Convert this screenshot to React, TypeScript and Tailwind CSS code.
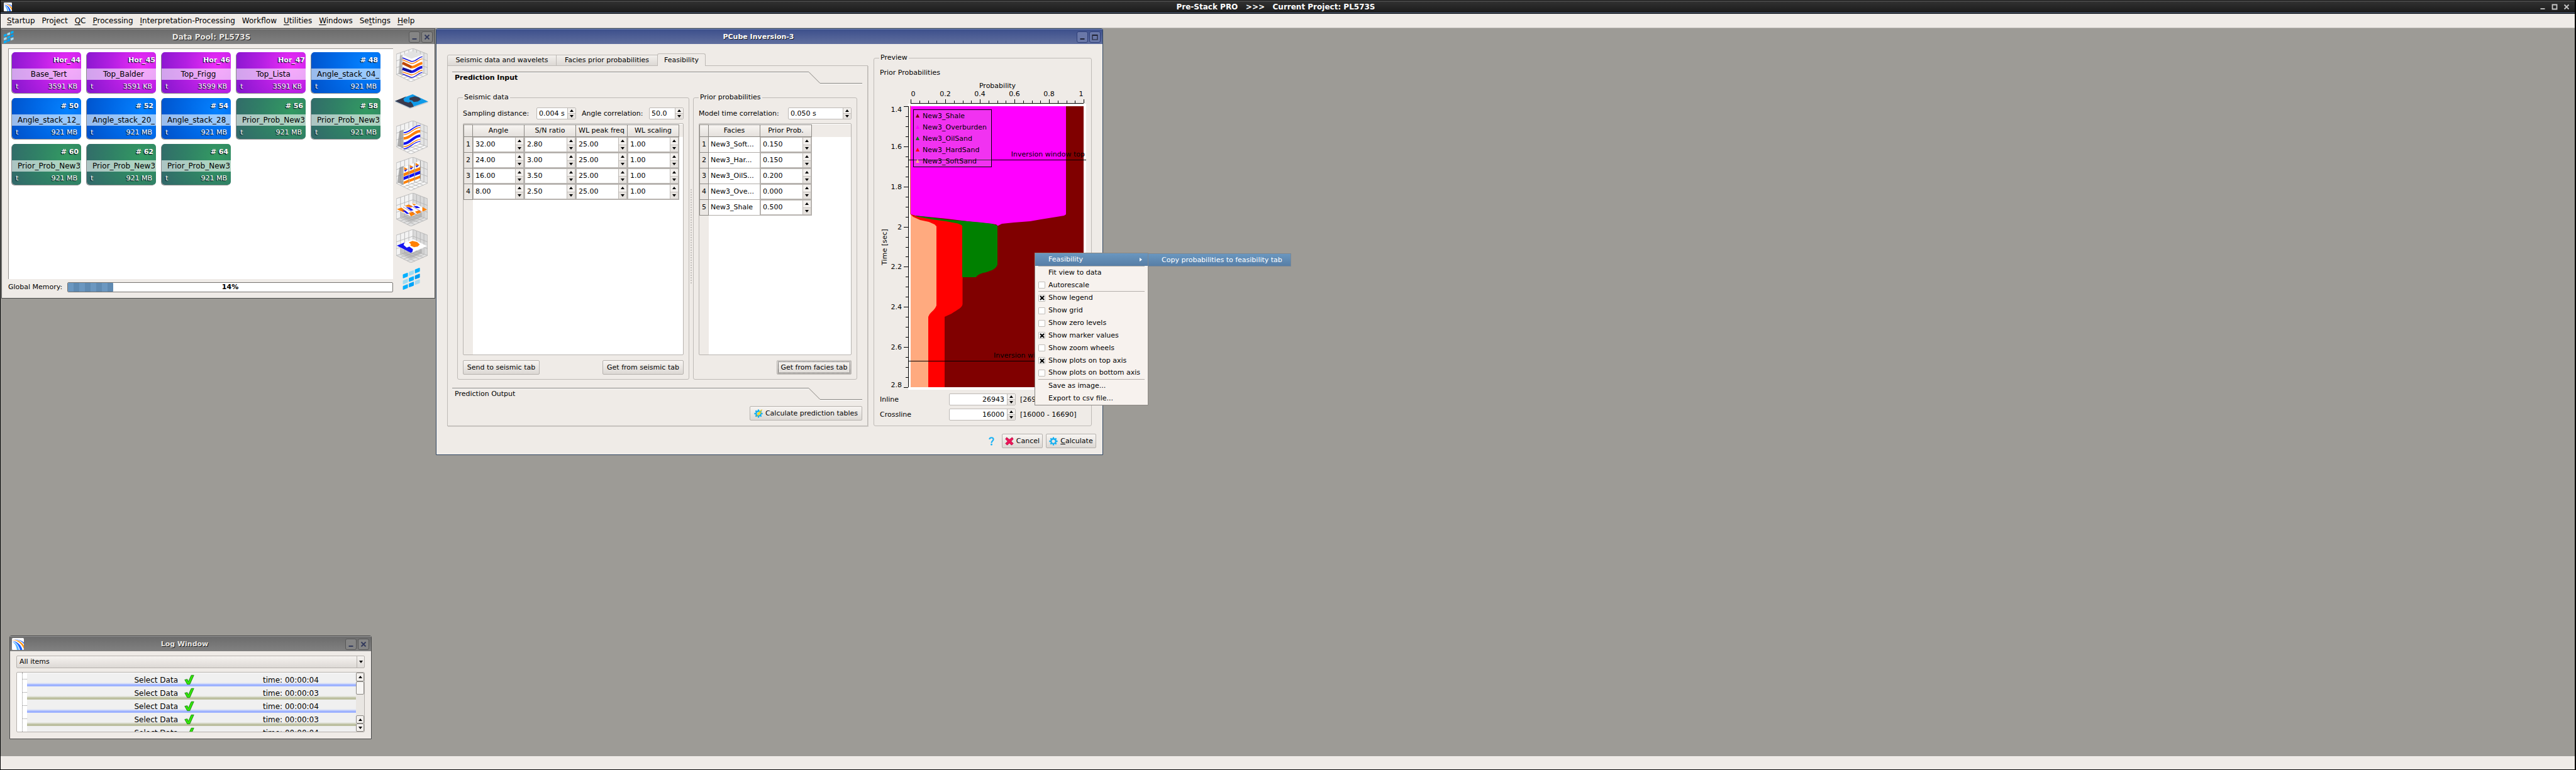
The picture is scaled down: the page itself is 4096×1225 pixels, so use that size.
import React from "react";

/* ---------- shared data ---------- */

const MENUS: [string, string, string][] = [
  ["", "S", "tartup"],
  ["Pro", "j", "ect"],
  ["", "Q", "C"],
  ["", "P", "rocessing"],
  ["", "I", "nterpretation-Processing"],
  ["Workflow", "", ""],
  ["", "U", "tilities"],
  ["", "W", "indows"],
  ["Se", "t", "tings"],
  ["", "H", "elp"],
];

type Kind = "horizon" | "stack" | "prior";
const TILES: { id: string; name: string; size: string; kind: Kind }[] = [
  { id: "Hor_44", name: "Base_Tert", size: "3591 KB", kind: "horizon" },
  { id: "Hor_45", name: "Top_Balder", size: "3591 KB", kind: "horizon" },
  { id: "Hor_46", name: "Top_Frigg", size: "3599 KB", kind: "horizon" },
  { id: "Hor_47", name: "Top_Lista", size: "3591 KB", kind: "horizon" },
  { id: "# 48", name: "Angle_stack_04_1", size: "921 MB", kind: "stack" },
  { id: "# 50", name: "Angle_stack_12_2", size: "921 MB", kind: "stack" },
  { id: "# 52", name: "Angle_stack_20_2", size: "921 MB", kind: "stack" },
  { id: "# 54", name: "Angle_stack_28_3", size: "921 MB", kind: "stack" },
  { id: "# 56", name: "Prior_Prob_New3_", size: "921 MB", kind: "prior" },
  { id: "# 58", name: "Prior_Prob_New3_", size: "921 MB", kind: "prior" },
  { id: "# 60", name: "Prior_Prob_New3_", size: "921 MB", kind: "prior" },
  { id: "# 62", name: "Prior_Prob_New3_", size: "921 MB", kind: "prior" },
  { id: "# 64", name: "Prior_Prob_New3_", size: "921 MB", kind: "prior" },
];

const TILE_BG: Record<Kind, string> = {
  horizon: "bg-[radial-gradient(circle_at_80%_30%,#ee2df8_0%,#b31fe2_50%,#8316cc_100%)]",
  stack: "bg-[radial-gradient(circle_at_80%_30%,#0582ff_0%,#0068e6_50%,#0050c8_100%)]",
  prior: "bg-[radial-gradient(circle_at_80%_30%,#339a62_0%,#308066_50%,#32686a_100%)]",
};

/* ---------- small drawings ---------- */

function AppLogo({ className }: { className: string }) {
  return (
    <svg viewBox="0 0 24 24" className={className} preserveAspectRatio="none" aria-hidden="true">
      <rect width="24" height="24" rx="2" fill="#fff" />
      <path d="M0 3C10 2 20 6 24 12V9C19 4 9 2 0 3Z" fill="#1a62ff" />
      <path d="M0 4C12 4 20 12 24 22V15C19 7 10 3 0 4Z" fill="#ff9416" />
      <path d="M0 6C8 7 14 15 16 24H21C19 14 10 6 0 6Z" fill="#1a62ff" />
      <path d="M0 8C5 9 9 16 10 24H14C13 15 7 8 0 8Z" fill="#59b4ff" />
    </svg>
  );
}

function PoolGlyph({ className }: { className: string }) {
  const cells: [number, number, string][] = [
    [0, 10, "#00b0ff"], [12, 5, "#9fdcf2"], [24, 0, "#00b0ff"],
    [0, 22, "#9fdcf2"], [12, 17, "#00b0ff"], [24, 12, "#009bf0"],
    [0, 33, "#00b0ff"], [12, 28, "#00a4fa"], [24, 23, "#a6d8ee"],
  ];
  return (
    <svg viewBox="0 0 35 44" className={className} aria-hidden="true">
      {cells.map(([x, y, c]) => (
        <path key={`${x}-${y}`} d={`M${x + 1} ${y + 3}l8-3q1 0 1 1v6l-1 1-8 3q-1 0-1-1v-6z`} fill={c} />
      ))}
    </svg>
  );
}

function Backdrop({ dark }: { dark?: boolean }) {
  return (
    <>
      <path d="M0 11L32 0V40L0 50Z" fill="#f3f3f3" />
      <path d="M32 0L60 11V50L32 40Z" fill={dark ? "#d9d9d9" : "#e4e4e4"} />
      <path d="M0 50L32 40L60 50L28 64Z" fill={dark ? "#e0e0e0" : "#f8f8f8"} />
      <path
        d="M0 11L32 0L60 11V50L28 64L0 50ZM32 0V40M0 24L32 13L60 24M0 37L32 27L60 37M0 50L32 40L60 50M8 8V48M16 6V45M24 3V43M39 3V43M46 6V45M53 8V48M7 54L39 43M14 57L46 45M21 60L53 48M8 48L36 61M16 45L44 57M24 43L52 54"
        fill="none"
        stroke="#b2b2b2"
        strokeWidth="1"
      />
    </>
  );
}

function CubeIcon() {
  return (
    <svg viewBox="0 0 60 64" className="h-[53px] w-[50px]" aria-hidden="true">
      <Backdrop />
      <path d="M7 14L12 12V52L4 49Z" fill="#999" opacity="0.6" />
      <path d="M12 12L30 5L50 12L29 20Z" fill="#e2e2e2" />
      <path d="M12 12L29 20V57L12 49Z" fill="#fafafa" />
      <path d="M29 20L50 12V47C44 48 38 56 29 57Z" fill="#fff" />
      <g fill="none">
        <path d="M12 18L29 25C37 26 42 17 50 16" stroke="#1b17d8" strokeWidth="2" />
        <path d="M12 22L29 29C37 30 42 21 50 20" stroke="#ff7d0a" strokeWidth="1.6" />
        <path d="M12 28L29 36C37 37 42 29 50 28" stroke="#ff7d0a" strokeWidth="5" />
        <path d="M12 28L29 36" stroke="#c04808" strokeWidth="5" />
        <path d="M12 39L29 45C37 45 42 36 50 36" stroke="#1b17d8" strokeWidth="5" />
        <path d="M12 39L29 45" stroke="#10109c" strokeWidth="5" />
        <path d="M12 45L29 51C37 51 42 43 50 42" stroke="#ff7d0a" strokeWidth="1.6" />
        <path d="M12 49L29 56C37 56 42 47 50 46" stroke="#1b17d8" strokeWidth="1.6" />
      </g>
    </svg>
  );
}

function MapIcon() {
  return (
    <svg viewBox="0 0 64 28" className="h-[23px] w-[53px]" aria-hidden="true">
      <path d="M0 13L29 25L64 14V16L29 28L0 15Z" fill="#c9cbd0" />
      <path d="M0 13L34 0L64 14L29 26Z" fill="#0f9ae8" />
      <path d="M0 13L22 4L16 9L18 14L26 16L30 14L34 19L36 24L29 26Z" fill="#3a3a4c" />
      <path d="M28 7L38 4L46 6L50 10L44 14L36 15L33 12L28 11Z" fill="#3a3a4c" />
    </svg>
  );
}

function SectionIcon() {
  return (
    <svg viewBox="0 0 60 64" className="h-[53px] w-[50px]" aria-hidden="true">
      <Backdrop />
      <path d="M6 20L14 17V54L2 48Z" fill="#8d8d8d" opacity="0.7" />
      <path d="M14 19L46 7V43L14 55Z" fill="#fff" />
      <g fill="none">
        <path d="M14 23C26 24 33 9 46 9" stroke="#1414f0" strokeWidth="2" />
        <path d="M14 27C26 28 33 13 46 13" stroke="#ff8000" strokeWidth="1.6" />
        <path d="M14 34C26 35 33 20 46 20" stroke="#ff8000" strokeWidth="5" />
        <path d="M14 44C26 45 33 29 46 29" stroke="#1414f0" strokeWidth="5" />
        <path d="M14 50C26 51 33 36 46 36" stroke="#ff8000" strokeWidth="1.6" />
        <path d="M14 54C26 54 33 40 46 40" stroke="#1414f0" strokeWidth="1.8" />
      </g>
    </svg>
  );
}

function GatherIcon() {
  return (
    <svg viewBox="0 0 60 64" className="h-[53px] w-[50px]" aria-hidden="true">
      <Backdrop />
      <path d="M6 20L14 17V54L2 48Z" fill="#8d8d8d" opacity="0.7" />
      {[14, 25, 36].map((x, i) => (
        <g key={x} transform={`translate(${x} ${19 - i * 4})`}>
          <path d="M0 0L10 -4V32L0 36Z" fill="#fff" />
          <path d="M1 0L8 4L1 6Z" fill="#ff8000" />
          <path d="M1 6L8 4L3 9Z" fill="#1414f0" />
          <path d="M0 12L10 8V14L0 18Z" fill="#ff8000" />
          <path d="M0 19L10 15V21L0 25Z" fill="#1414f0" />
          <path d="M0 28L10 24V29L0 33Z" fill="#ff8000" />
          <path d="M10 -4V32" stroke="#777" strokeWidth="1" />
        </g>
      ))}
    </svg>
  );
}

function SliceIcon() {
  return (
    <svg viewBox="0 0 60 64" className="h-[53px] w-[50px]" aria-hidden="true">
      <Backdrop dark />
      <path d="M8 36L30 45L50 37L50 46L28 56L8 46Z" fill="#a5a5a5" opacity="0.6" />
      <path d="M1 31L33 19L59 32L28 45Z" fill="#fff" />
      <path d="M1 31L10 28L18 34L14 37ZM16 25L24 22L32 26L28 28ZM30 20L38 22L34 24ZM50 27L59 32L50 36ZM36 36L44 33L48 37L40 40ZM24 38L32 36L36 41L28 45Z" fill="#ff8000" />
      <path d="M11 33L18 34L25 40L20 40ZM18 27L26 28L33 33L28 34ZM33 25L40 25L46 29L38 29Z" fill="#1414f0" />
      <path d="M13 27L38 41M25 23L49 36" stroke="#9a6f9a" strokeWidth="1" />
    </svg>
  );
}

function HorizonIcon() {
  return (
    <svg viewBox="0 0 60 64" className="h-[53px] w-[50px]" aria-hidden="true">
      <Backdrop dark />
      <path d="M8 36L30 45L50 37L50 46L28 56L8 46Z" fill="#a5a5a5" opacity="0.6" />
      <path d="M1 31L33 19L59 32L28 45Z" fill="#fff" />
      <path d="M1 31L16 25L14 30L20 35L25 33L32 38L31 43L28 45Z" fill="#1414f0" />
      <path d="M24 25L31 22L40 24L45 29L41 33L34 34L27 31L28 28Z" fill="#ff8000" />
    </svg>
  );
}

function Gear({ bolt }: { bolt?: boolean }) {
  return (
    <svg viewBox="0 0 16 16" className="size-[14px] shrink-0" aria-hidden="true">
      <g fill="none" stroke="#12aef0">
        <circle cx="8" cy="8" r="4.3" strokeWidth="2.6" />
        <path d="M8 0.5V3M8 13V15.5M0.5 8H3M13 8H15.5M2.7 2.7L4.5 4.5M11.5 11.5L13.3 13.3M13.3 2.7L11.5 4.5M4.5 11.5L2.7 13.3" strokeWidth="2.6" />
      </g>
      {bolt && <path d="M13 1L5 9L8 9L4 14L14 6L10 6L15 1Z" fill="#ffe21a" stroke="#c9a800" strokeWidth="0.4" />}
    </svg>
  );
}

function CrossGlyph() {
  return (
    <svg viewBox="0 0 16 16" className="size-[14px] shrink-0" aria-hidden="true">
      <path d="M3 1L8 5L13 1L15 4L11 8L15 12L12 15L8 11L4 15L1 12L5 8L1 4Z" fill="#f0145a" stroke="#b00a3c" strokeWidth="1" />
    </svg>
  );
}

function HelpGlyph() {
  return (
    <svg viewBox="0 0 10 16" className="h-[14px] w-[9px]" aria-hidden="true">
      <path d="M1.5 4.5C1.5 0.5 8.5 0.5 8.5 4.5C8.5 7.5 5 7.5 5 11" fill="none" stroke="#1ab2f5" strokeWidth="2.4" />
      <circle cx="5" cy="14" r="1.6" fill="#1ab2f5" />
    </svg>
  );
}

function Tick() {
  return (
    <svg viewBox="0 0 20 20" className="h-[17px] w-[16px]" aria-hidden="true">
      <path d="M1 10L6 9L8 14L14 1L19 1L11 19L6 19Z" fill="#33e60a" stroke="#1c8c10" strokeWidth="1.2" />
    </svg>
  );
}

function Tri({ down }: { down?: boolean }) {
  return (
    <svg viewBox="0 0 6 4" className="h-[4px] w-[6px]" aria-hidden="true">
      <path d={down ? "M0 0H6L3 4Z" : "M0 4H6L3 0Z"} fill="#000" />
    </svg>
  );
}

/* ---------- controls ---------- */

function WinButton({ kind, active }: { kind: "min" | "max" | "close"; active?: boolean }) {
  return (
    <button
      type="button"
      aria-label={kind}
      className={`flex size-[18px] items-center justify-center rounded-[3px] border ${
        active ? "border-[#2f3f78] bg-[#6a78a8]" : "border-[#575757] bg-[#858585]"
      }`}
    >
      <svg viewBox="0 0 10 10" className="size-[10px]" fill="none" stroke={active ? "#1f2233" : "#333a5c"} aria-hidden="true">
        {kind === "min" && <path d="M1.5 8H8.5" strokeWidth="2" />}
        {kind === "max" && <path d="M1 1.5H9V9H1ZM1 2.5H9" strokeWidth="1.2" />}
        {kind === "close" && <path d="M1.5 1.5L8.5 8.5M8.5 1.5L1.5 8.5" strokeWidth="1.8" />}
      </svg>
    </button>
  );
}

function TitleBar({
  title,
  active,
  icon,
  last,
}: {
  title: string;
  active?: boolean;
  icon?: React.ReactNode;
  last: "max" | "close";
}) {
  return (
    <header
      className={`flex h-[24px] shrink-0 items-center gap-[2px] border-t pr-[3px] ${icon ? "pl-[3px]" : "pl-[8px]"} ${
        active
          ? "border-[#7383b8] bg-linear-to-b from-[#3d508c] to-[#606e9e]"
          : "border-[#979797] bg-linear-to-b from-[#6c6c6c] to-[#818181]"
      }`}
    >
      {icon}
      <h2 className={`flex-1 text-center font-bold [text-shadow:1px_1px_0_#1c1c1c] ${active ? "text-white" : "text-[#e8e6e2]"}`}>
        {title}
      </h2>
      <WinButton kind="min" active={active} />
      <WinButton kind={last} active={active} />
    </header>
  );
}

function Spin({ value, label, className, right, flat }: { value: string; label: string; className: string; right?: boolean; flat?: boolean }) {
  return (
    <span className={`flex overflow-hidden border border-[#bdb9b5] bg-white ${flat ? "" : "rounded-[2px]"} ${className}`}>
      <input
        aria-label={label}
        defaultValue={value}
        className={`min-w-0 flex-1 bg-transparent outline-none ${right ? "pr-[4px] text-right" : "pl-[3px]"}`}
      />
      <span className="flex w-[13px] shrink-0 flex-col border-l border-[#bdb9b5]">
        <button type="button" aria-label={`${label} up`} className="flex flex-1 items-center justify-center border-b border-[#c8c4c0] bg-[#f3f0ed]">
          <Tri />
        </button>
        <button type="button" aria-label={`${label} down`} className="flex flex-1 items-center justify-center bg-[#e6e2de]">
          <Tri down />
        </button>
      </span>
    </span>
  );
}

function Push({ children, className = "", focus }: { children: React.ReactNode; className?: string; focus?: boolean }) {
  return (
    <button
      type="button"
      className={`flex h-[23px] items-center justify-center rounded-[2px] border border-[#b5b1ad] bg-linear-to-b from-[#f8f5f2] to-[#dcd8d4] p-px whitespace-nowrap ${className}`}
    >
      <span className={`flex h-full items-center justify-center gap-[4px] ${focus ? "w-full border border-dotted border-black" : ""}`}>{children}</span>
    </button>
  );
}

function Group({ title, className, children }: { title: string; className: string; children: React.ReactNode }) {
  return (
    <fieldset className={`min-w-0 rounded-[3px] border border-[#bebab6] px-[8px] ${className}`}>
      <legend className="px-[2px] leading-[14px]">{title}</legend>
      {children}
    </fieldset>
  );
}

function SectionHead({ title, bold }: { title: string; bold?: boolean }) {
  return (
    <div className="flex h-[19px] items-stretch">
      <h3 className={`flex flex-1 items-center border-t border-[#85827e] pl-[4px] shadow-[inset_0_1px_0_#fff] ${bold ? "font-bold" : ""}`}>{title}</h3>
      <svg viewBox="0 0 18 19" className="w-[18px]" aria-hidden="true">
        <path d="M0 0.5L18 18.5" stroke="#85827e" />
      </svg>
      <div className="w-[67px] border-b border-[#85827e] shadow-[0_1px_0_#fff]" />
    </div>
  );
}

const TH = "h-[20px] border-t border-r border-b border-[#8c8984] bg-linear-to-b from-[#f8f5f2] to-[#e4e0dc] p-0 text-center font-normal whitespace-nowrap overflow-hidden";
const RH = "h-[25px] border-r border-b border-[#8c8984] bg-[#ebe7e3] p-0 text-center font-normal";
const TD = "h-[25px] border-r border-b border-[#b0aca8] bg-white p-0";

function DataTable({ heads, rows, textFirst, name }: { heads: string[]; rows: string[][]; textFirst?: boolean; name: string }) {
  return (
    <div className="flex-1 rounded-[2px] border border-[#b8b4b0] bg-[linear-gradient(to_right,#efebe7_15px,#fff_15px)] pt-px">
      <table aria-label={name} className="w-full table-fixed border-separate border-spacing-0">
        <colgroup>
          <col className="w-[15px]" />
          {heads.map((h) => (
            <col key={h} className="w-[82px]" />
          ))}
          <col />
        </colgroup>
        <thead>
          <tr>
            <th className={`${TH} border-l`} />
            {heads.map((h) => (
              <th key={h} scope="col" className={TH}>
                {h}
              </th>
            ))}
            <th className="bg-[#efebe7] p-0" />
          </tr>
        </thead>
        <tbody>
          {rows.map((r, i) => (
            <tr key={i}>
              <th scope="row" className={`${RH} border-l`}>
                {i + 1}
              </th>
              {r.map((v, j) => (
                <td key={j} className={TD}>
                  {textFirst && j === 0 ? <span className="block pl-[3px]">{v}</span> : <Spin flat className="h-[24px] w-full" value={v} label={`${heads[j]} ${i + 1}`} />}
                </td>
              ))}
              <td className="p-0" />
            </tr>
          ))}
        </tbody>
      </table>
    </div>
  );
}

/* ---------- windows ---------- */

function DataPool() {
  return (
    <section className="absolute top-0 left-px flex h-[430px] w-[690px] flex-col border border-[#4a4a4a] bg-[#efebe7] text-[12px]">
      <TitleBar title="Data Pool: PL573S" last="close" icon={<PoolGlyph className="h-[20px] w-[16px]" />} />
      <div className="flex flex-1 pt-[7px] pr-[8px] pl-[10px]">
        <div className="flex w-[612px] flex-col">
          <ul className="grid h-[367px] grid-cols-[repeat(5,110px)] content-start gap-x-[9px] gap-y-[8px] border-t border-l border-[#96938f] bg-white pt-[5px] pl-[5px]">
            {TILES.map((t) => (
              <li
                key={t.id}
                className={`flex h-[65px] flex-col overflow-hidden rounded-[5px] text-white shadow-[-1px_1px_0_#8a8a8a] ${TILE_BG[t.kind]}`}
              >
                <span className={`flex h-[26px] items-center justify-end text-[11px] font-bold [text-shadow:-1px_1px_1px_#000] ${t.kind === "horizon" ? "pr-[1px]" : "pr-[4px]"}`}>
                  {t.id}
                </span>
                <span className="flex h-[18px] items-center bg-white/60 pr-[2px] pl-[9px] text-black">
                  <span className={`w-full overflow-hidden whitespace-nowrap ${t.kind === "horizon" ? "text-center" : ""}`}>{t.name}</span>
                </span>
                <span className="flex flex-1 items-center justify-between px-[6px] text-[11px] [text-shadow:-1px_1px_1px_#000]">
                  <span>t</span>
                  <span>{t.size}</span>
                </span>
              </li>
            ))}
          </ul>
          <div className="mt-[5px] flex h-[16px] items-center text-[11px]">
            <span className="w-[94px] whitespace-nowrap">Global Memory:</span>
            <div role="progressbar" aria-valuenow={14} className="grid h-full flex-1 rounded-[2px] border border-[#76736f] bg-white">
              <div className="h-full w-[14%] rounded-[1px] bg-[repeating-linear-gradient(to_right,#6b97c0_0_9px,#5f8ab2_9px_18px)] [grid-area:1/1]" />
              <div className="text-center leading-[14px] font-bold [grid-area:1/1]">14%</div>
            </div>
          </div>
        </div>
        <div className="flex h-[387px] flex-1 flex-col items-center justify-between pl-[1px]">
          <CubeIcon />
          <span className="flex h-[53px] items-center">
            <MapIcon />
          </span>
          <SectionIcon />
          <GatherIcon />
          <SliceIcon />
          <HorizonIcon />
          <span className="flex h-[42px] items-center">
            <PoolGlyph className="h-[35px] w-[29px]" />
          </span>
        </div>
      </div>
    </section>
  );
}

function LogWindow() {
  const rows = ["04", "03", "04", "03", "04"];
  return (
    <section className="absolute top-[966px] left-[14px] flex w-[576px] flex-col rounded-t-[3px] border border-[#4a4a4a] bg-[#efebe7]">
      <TitleBar title="Log Window" last="close" icon={<AppLogo className="size-[19px]" />} />
      <div className="flex flex-col gap-[6px] px-[10px] pt-[7px] pb-[10px]">
        <label className="relative flex h-[20px]">
          <span className="sr-only">Item filter</span>
          <select className="h-full w-full appearance-none rounded-[2px] border border-[#b5b1ad] bg-linear-to-b from-[#f6f3f0] to-[#ddd9d5] pl-[4px] outline-none">
            <option>All items</option>
          </select>
          <span className="pointer-events-none absolute top-0 right-0 flex h-full w-[13px] items-center justify-center border-l border-[#b5b1ad]">
            <Tri down />
          </span>
        </label>
        <div className="flex h-[96px] overflow-hidden rounded-[2px] border border-[#b5b1ad] bg-white">
          <div className="flex w-[16px] justify-end">
            <div className="h-full w-[8px] border-l border-dotted border-[#8c8c8c]">
              {rows.map((_, i) => (
                <div key={i} className="h-[21px] pt-[10px]">
                  <div className="border-t border-dotted border-[#8c8c8c]" />
                </div>
              ))}
            </div>
          </div>
          <ul className="flex-1 pt-px">
            {rows.map((s, i) => (
              <li
                key={i}
                className={`grid h-[21px] grid-cols-[240px_26px_1fr] items-center ${
                  i % 2 === 0
                    ? "bg-[linear-gradient(to_bottom,#f0f0f0_70%,#ccd6fa_82%,#9db2ff_85%)]"
                    : "bg-[linear-gradient(to_bottom,#f0f0f0_70%,#d4d6c4_82%,#bcbf9f_85%)]"
                }`}
              >
                <span className="text-right text-[12px]">Select Data</span>
                <span className="flex justify-end">
                  <Tick />
                </span>
                <span className="pl-[109px] text-[12px]">time: 00:00:{s}</span>
              </li>
            ))}
          </ul>
          <div className="flex w-[13px] flex-col bg-[#e9e6e2]">
            <button type="button" aria-label="Scroll up" className="flex h-[14px] items-center justify-center rounded-[2px] border border-[#8c8984] bg-[#f3f0ed]">
              <Tri />
            </button>
            <div className="h-[21px] rounded-[2px] border border-[#8c8984] bg-[#f7f5f3]" />
            <div className="flex-1" />
            <button type="button" aria-label="Page up" className="flex h-[13px] items-center justify-center rounded-[2px] border border-[#8c8984] bg-[#f3f0ed]">
              <Tri />
            </button>
            <button type="button" aria-label="Scroll down" className="flex h-[13px] items-center justify-center rounded-[2px] border border-[#8c8984] bg-[#f3f0ed]">
              <Tri down />
            </button>
          </div>
        </div>
      </div>
    </section>
  );
}

const LEGEND: [string, string][] = [
  ["New3_Shale", "#800000"],
  ["New3_Overburden", "#ff00ff"],
  ["New3_OilSand", "#008000"],
  ["New3_HardSand", "#ff0000"],
  ["New3_SoftSand", "#ffaa7f"],
];

/* The plot spans probability 0..1 over x 52..327 and time 1.4..2.8 s over y 41..488. */
function ProbabilityPlot() {
  const px = (p: number) => 52 + 275 * p;
  const ty = (t: number) => 41 + (447 * (t - 1.4)) / 1.4;
  const xs = Array.from({ length: 21 }, (_, i) => i);
  const ys = Array.from({ length: 29 }, (_, i) => i);
  return (
    <svg viewBox="0 0 333 493" className="h-[493px] w-full" role="img" aria-label="Prior probabilities against time" fontSize="11">
      <rect x="48" y="37" width="283" height="455" fill="#fff" />
      <rect x="52" y="41" width="275" height="447" fill="#800000" />
      <path d="M52 41H299V213L296 215L284 217L259 221L242 224L216 226L197 228L191 231H190L188 229L180 228L150 225L110 220L80 217L59 215L52 213Z" fill="#f0f" />
      <path d="M52 213L59 215L84 218L106 221L160 225.5L182 228L190 231V293C188 300 178 304 168 306C160 308 157 311 156 313H100L120 250Z" fill="#008000" />
      <path d="M52 213L64 217L86 221L108 224L127 227.5L133 230L134.5 233V356C134 362 124 366 117 371L106 376V488H60Z" fill="#f00" />
      <path d="M134 233V313H156L170 250Z" fill="#008000" />
      <path d="M52 213L56 217L67 222L81 225L90 229L93 232V358C91 364 86 367 82 372L80 376V488H52Z" fill="#ffaa7f" />
      <path d="M51.5 40V213" stroke="#e08040" />
      <g stroke="#000" shapeRendering="crispEdges">
        <path d="M52 36.5H327M48.5 41V488" fill="none" />
        {xs.map((i) => (
          <path key={i} d={`M${Math.round(px(i / 20))}.5 36V${i % 4 ? 32 : 30}`} />
        ))}
        {ys.map((i) => (
          <path key={i} d={`M48 ${Math.round(ty(1.4 + i * 0.05))}.5H${i % 4 ? 44 : 41}`} />
        ))}
      </g>
      <text x="190" y="12" textAnchor="middle">Probability</text>
      {["0", "0.2", "0.4", "0.6", "0.8", "1"].map((t, i) => (
        <text key={t} x={i === 0 ? 56 : i === 5 ? 323 : px(i / 5)} y="25" textAnchor="middle">
          {t}
        </text>
      ))}
      {["1.4", "1.6", "1.8", "2", "2.2", "2.4", "2.6", "2.8"].map((t, i) => (
        <text key={t} x="38" y={ty(1.4 + i * 0.2) + (i === 0 ? 9 : i === 7 ? 0 : 4)} textAnchor="end">
          {t}
        </text>
      ))}
      <text transform="translate(14 265) rotate(-90)" textAnchor="middle">Time [sec]</text>
      <path d="M48 126.5H331M48 446.5H331" stroke="#000" />
      <rect x="56.5" y="46.5" width="124" height="91" fill="#c8c8c8" fillOpacity="0.25" stroke="#000" />
      {LEGEND.map(([n, c], i) => (
        <g key={n}>
          <path d={`M60 ${59 + i * 18}h6l-3 -6z`} fill={c} />
          <text x="71" y={60 + i * 18}>{n}</text>
        </g>
      ))}
      <text x="329" y="121" textAnchor="end">Inversion window top</text>
      <text x="184" y="441">Inversion window base</text>
    </svg>
  );
}

function PCube() {
  return (
    <section className="absolute top-0 left-[692px] flex w-[1061px] flex-col rounded-t-[3px] border border-[#2f4560] bg-[#efebe7]">
      <TitleBar title="PCube Inversion-3" active last="max" />
      <div className="flex flex-col pt-[15px] pr-[17px] pb-[10px] pl-[17px]">
        <div className="flex h-[593px] gap-[9px]">
          <div className="flex flex-1 flex-col">
            <div role="tablist" className="relative z-10 -mb-px flex h-[20px] items-end">
              <button role="tab" aria-selected="false" className="h-[18px] w-[174px] rounded-tl-[3px] border border-[#bebab6] bg-linear-to-b from-[#f3f0ed] to-[#dcd8d4] leading-[16px]">
                Seismic data and wavelets
              </button>
              <button role="tab" aria-selected="false" className="-ml-px h-[18px] w-[162px] border border-[#bebab6] bg-linear-to-b from-[#f3f0ed] to-[#dcd8d4] leading-[16px]">
                Facies prior probabilities
              </button>
              <button role="tab" aria-selected="true" className="-ml-px h-[20px] w-[77px] rounded-t-[3px] border border-b-0 border-[#bebab6] bg-[#efebe7]">
                Feasibility
              </button>
            </div>
            <div className="flex flex-1 flex-col border border-[#bebab6] pt-[9px] pr-[8px] pl-[7px] shadow-[1px_1px_0_#cfcbc7]">
              <SectionHead title="Prediction Input" bold />
              <div className="mt-[15px] flex h-[456px] px-[8px]">
                <Group title="Seismic data" className="flex-1">
                  <div className="flex h-full flex-col pt-[9px] pb-[7px]">
                    <div className="mb-[6px] flex h-[19px] items-center justify-between whitespace-nowrap">
                      <span className="w-[115px]">Sampling distance:</span>
                      <Spin className="h-full w-[63px]" value="0.004 s" label="Sampling distance" />
                      <span className="ml-[7px] w-[105px]">Angle correlation:</span>
                      <Spin className="h-full w-[55px]" value="50.0" label="Angle correlation" />
                    </div>
                    <DataTable
                      name="Seismic data"
                      heads={["Angle", "S/N ratio", "WL peak freq", "WL scaling"]}
                      rows={[
                        ["32.00", "2.80", "25.00", "1.00"],
                        ["24.00", "3.00", "25.00", "1.00"],
                        ["16.00", "3.50", "25.00", "1.00"],
                        ["8.00", "2.50", "25.00", "1.00"],
                      ]}
                    />
                    <div className="mt-[8px] flex justify-between">
                      <Push className="w-[122px]">Send to seismic tab</Push>
                      <Push className="w-[129px]">Get from seismic tab</Push>
                    </div>
                  </div>
                </Group>
                <div className="flex w-[6px] items-center justify-center">
                  <div className="h-[150px] border-l-2 border-dotted border-[#c4c0bc]" />
                </div>
                <Group title="Prior probabilities" className="w-[261px]">
                  <div className="flex h-full flex-col pt-[9px] pb-[7px]">
                    <div className="mb-[6px] flex h-[19px] items-center justify-between whitespace-nowrap">
                      <span>Model time correlation:</span>
                      <Spin className="h-full w-[101px]" value="0.050 s" label="Model time correlation" />
                    </div>
                    <DataTable
                      name="Prior probabilities"
                      textFirst
                      heads={["Facies", "Prior Prob."]}
                      rows={[
                        ["New3_Soft...", "0.150"],
                        ["New3_Har...", "0.150"],
                        ["New3_OilS...", "0.200"],
                        ["New3_Ove...", "0.000"],
                        ["New3_Shale", "0.500"],
                      ]}
                    />
                    <div className="mt-[8px] flex justify-end">
                      <Push className="w-[119px]" focus>
                        Get from facies tab
                      </Push>
                    </div>
                  </div>
                </Group>
              </div>
              <div className="mt-[13px]">
                <SectionHead title="Prediction Output" />
              </div>
              <div className="mt-[10px] flex justify-end">
                <Push className="w-[179px]">
                  <Gear bolt />
                  Calculate prediction tables
                </Push>
              </div>
            </div>
          </div>
          <Group title="Preview" className="w-[347px]">
            <div className="pt-[9px] pl-px">
              <div className="mb-[4px] leading-[16px]">Prior Probabilities</div>
              <div className="-mr-[2px] -ml-[3px]">
                <ProbabilityPlot />
              </div>
              <div className="mt-[5px] grid grid-cols-[110px_106px_1fr] items-center gap-y-[5px]">
                <span>Inline</span>
                <Spin right className="h-[19px]" value="26943" label="Inline" />
                <span className="pl-[7px]">[269</span>
                <span>Crossline</span>
                <Spin right className="h-[19px]" value="16000" label="Crossline" />
                <span className="pl-[7px]">[16000 - 16690]</span>
              </div>
            </div>
          </Group>
        </div>
        <div className="mt-[12px] -mr-[7px] flex items-center justify-end gap-[5px]">
          <button type="button" aria-label="Help" className="mr-[7px]">
            <HelpGlyph />
          </button>
          <Push className="w-[65px]">
            <CrossGlyph />
            Cancel
          </Push>
          <Push className="w-[80px]">
            <Gear />
            <span>
              <u>C</u>alculate
            </span>
          </Push>
        </div>
      </div>
    </section>
  );
}

function CheckItem({ label, on }: { label: string; on?: boolean }) {
  return (
    <label className="flex flex-1 items-center gap-[5px] pl-[5px]">
      <span className="grid size-[11px] place-items-center rounded-[1px] border border-[#c0bcb8] bg-white">
        <input type="checkbox" defaultChecked={on} className="peer size-[9px] appearance-none [grid-area:1/1]" />
        <svg viewBox="0 0 8 8" className="hidden size-[8px] [grid-area:1/1] peer-checked:block" aria-hidden="true">
          <path d="M1 1L7 7M7 1L1 7" stroke="#000" strokeWidth="2.2" />
        </svg>
      </span>
      {label}
    </label>
  );
}

function ContextMenu() {
  const rule = "mx-[5px] border-t border-[#b3afab]";
  const plain = "flex flex-1 items-center pl-[21px] text-left";
  const hot = "bg-linear-to-b from-[#6a97c0] to-[#577ea6] text-white";
  return (
    <div className="absolute top-[357px] left-[1644px] flex items-start whitespace-nowrap">
      <div role="menu" className="flex h-[243px] w-[181px] flex-col border border-[#8c8984] bg-[#f7f2ee]">
        <button role="menuitem" className={`flex flex-1 items-center justify-between pr-[9px] pl-[21px] ${hot}`}>
          Feasibility
          <svg viewBox="0 0 4 6" className="h-[6px] w-[4px]" aria-hidden="true">
            <path d="M0 0V6L4 3Z" fill="#fff" />
          </svg>
        </button>
        <div className={rule} />
        <button role="menuitem" className={plain}>Fit view to data</button>
        <CheckItem label="Autorescale" />
        <div className={rule} />
        <CheckItem label="Show legend" on />
        <CheckItem label="Show grid" />
        <CheckItem label="Show zero levels" />
        <CheckItem label="Show marker values" on />
        <CheckItem label="Show zoom wheels" />
        <CheckItem label="Show plots on top axis" on />
        <CheckItem label="Show plots on bottom axis" />
        <div className={rule} />
        <button role="menuitem" className={plain}>Save as image...</button>
        <button role="menuitem" className={plain}>Export to csv file...</button>
      </div>
      <button role="menuitem" className={`mt-px -ml-px flex h-[21px] w-[228px] items-center border border-[#7b8894] pl-[21px] ${hot}`}>
        Copy probabilities to feasibility tab
      </button>
    </div>
  );
}

export default function App() {
  return (
    <div className="flex h-screen flex-col overflow-hidden border-r-2 border-b border-l border-black bg-[#9d9b96] font-['DejaVu_Sans',sans-serif] text-[11px] leading-[14px] text-black">
      <header className="flex h-[22px] shrink-0 items-center border-t border-b border-black bg-linear-to-b from-[#333] to-[#1a1a1a] pr-[8px] pl-[5px] text-white shadow-[inset_0_1px_0_#6a6a6a,inset_0_-1px_0_#5a6c8c]">
        <AppLogo className="h-[14px] w-[13px]" />
        <h1 className="flex-1 text-center text-[12px] font-bold whitespace-pre">{"Pre-Stack PRO   >>>   Current Project: PL573S"}</h1>
        <div className="flex gap-[9px]">
          {["M1.5 8H8.5", "M1.5 1.5H8.5V8.5H1.5Z", "M1.5 1.5L8.5 8.5M8.5 1.5L1.5 8.5"].map((d, i) => (
            <button key={d} type="button" aria-label={["Minimize", "Maximize", "Close"][i]}>
              <svg viewBox="0 0 10 10" className="size-[10px]" fill="none" stroke="#c8c8c8" strokeWidth="1.8" aria-hidden="true">
                <path d={d} />
              </svg>
            </button>
          ))}
        </div>
      </header>
      <nav className="flex h-[23px] shrink-0 items-center gap-[11px] border-b border-[#b5b2ae] bg-[#efebe7] pl-[10px] text-[12px]">
        {MENUS.map(([a, b, c]) => (
          <button key={a + b + c} type="button">
            {a}
            <span className="underline underline-offset-2">{b}</span>
            {c}
          </button>
        ))}
      </nav>
      <main className="relative flex-1">
        <DataPool />
        <PCube />
        <LogWindow />
        <ContextMenu />
      </main>
      <footer className="h-[21px] shrink-0 bg-[#efebe7]" />
    </div>
  );
}
